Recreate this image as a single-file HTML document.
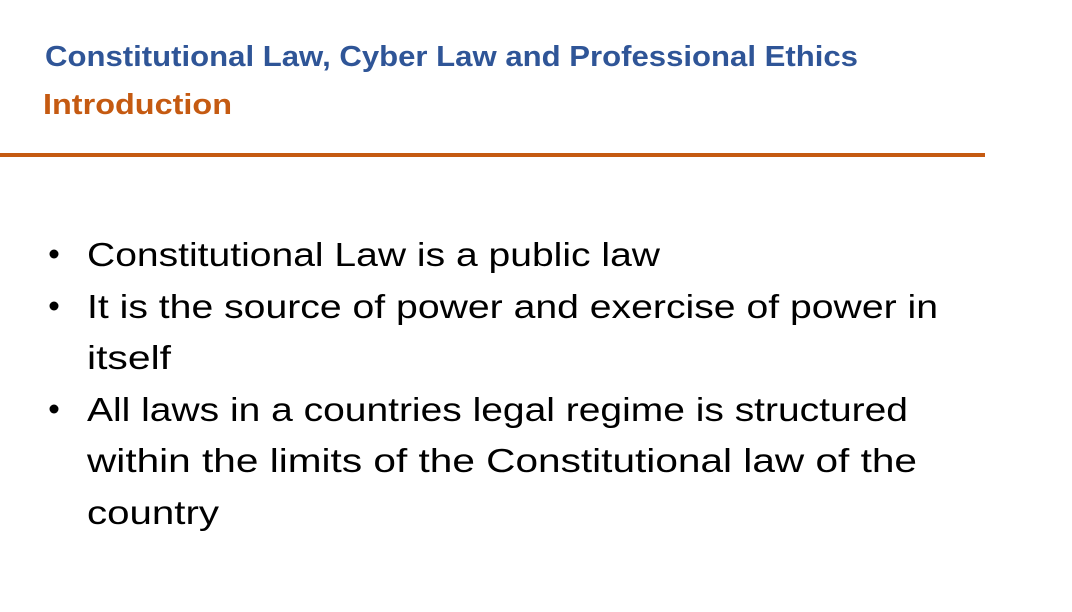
<!DOCTYPE html>
<html><head><meta charset="utf-8"><style>
html,body{margin:0;padding:0;background:#fff;width:1072px;height:612px;overflow:hidden}
svg{display:block}
</style></head><body>
<svg width="1072" height="612" viewBox="0 0 1072 612" xmlns="http://www.w3.org/2000/svg">
<g font-family="Liberation Sans, sans-serif" font-weight="bold" font-size="29">
<text x="45" y="66" fill="#2F5597" textLength="813" lengthAdjust="spacingAndGlyphs">Constitutional Law, Cyber Law and Professional Ethics</text>
<text x="43" y="114" fill="#C55A11" textLength="189" lengthAdjust="spacingAndGlyphs">Introduction</text>
</g>
<rect x="0" y="153" width="985" height="4" fill="#C55A11"/>
<g font-family="Liberation Sans, sans-serif" font-size="33" fill="#000">
<circle cx="54" cy="254" r="4.5"/>
<circle cx="54" cy="306" r="4.5"/>
<circle cx="54" cy="409" r="4.5"/>
<text x="87" y="266" textLength="573" lengthAdjust="spacingAndGlyphs">Constitutional Law is a public law</text>
<text x="87" y="318" textLength="851" lengthAdjust="spacingAndGlyphs">It is the source of power and exercise of power in</text>
<text x="87" y="369" textLength="84" lengthAdjust="spacingAndGlyphs">itself</text>
<text x="87" y="421" textLength="821" lengthAdjust="spacingAndGlyphs">All laws in a countries legal regime is structured</text>
<text x="87" y="472" textLength="830" lengthAdjust="spacingAndGlyphs">within the limits of the Constitutional law of the</text>
<text x="87" y="524" textLength="132" lengthAdjust="spacingAndGlyphs">country</text>
</g>
</svg>
</body></html>
